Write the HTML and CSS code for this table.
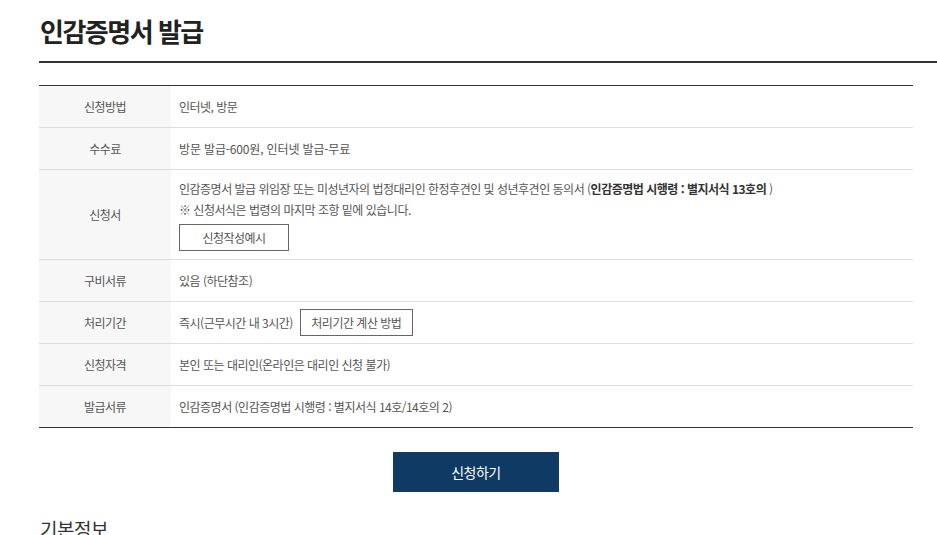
FILE: index.html
```html
<!DOCTYPE html>
<html lang="ko">
<head>
<meta charset="utf-8">
<title>인감증명서 발급</title>
<link rel="stylesheet" href="styles.css">
</head>
<body>
<div class="page">
  <div class="title-bar">
    <h1 class="title">인감증명서 발급</h1>
  </div>
  <div class="content">
    <table class="info">
      <tbody>
        <tr>
          <th>신청방법</th>
          <td>인터넷, 방문</td>
        </tr>
        <tr>
          <th>수수료</th>
          <td><span class="fee">방문 발급-600원, 인터넷 발급-무료</span></td>
        </tr>
        <tr>
          <th>신청서</th>
          <td class="multi">
            <p>인감증명서 발급 위임장 또는 미성년자의 법정대리인 한정후견인 및 성년후견인 동의서 (<strong>인감증명법 시행령 : 별지서식 13호의 </strong>)</p>
            <p>※ 신청서식은 법령의 마지막 조항 밑에 있습니다.</p>
            <span class="btn-line wide">신청작성예시</span>
          </td>
        </tr>
        <tr>
          <th>구비서류</th>
          <td>있음 (하단참조)</td>
        </tr>
        <tr>
          <th>처리기간</th>
          <td><div class="inline-row"><span>즉시(근무시간 내 3시간)</span><span class="btn-line">처리기간 계산 방법</span></div></td>
        </tr>
        <tr>
          <th>신청자격</th>
          <td>본인 또는 대리인(온라인은 대리인 신청 불가)</td>
        </tr>
        <tr>
          <th>발급서류</th>
          <td>인감증명서 (인감증명법 시행령 : 별지서식 14호/14호의 2)</td>
        </tr>
      </tbody>
    </table>
    <div class="actions">
      <span class="btn-primary">신청하기</span>
    </div>
    <h2 class="sub-title">기본정보</h2>
  </div>
</div>
</body>
</html>
```
FILE: styles.css
```css
* { box-sizing: border-box; }
html, body { margin: 0; padding: 0; background: #fff; }
body {
  font-family: "Noto Sans CJK KR", "Noto Sans", sans-serif;
  color: #555;
  overflow: hidden;
}
.page { padding-left: 39px; }
.title-bar {
  border-bottom: 2px solid #333;
  margin-right: -40px;
  padding: 14px 0 13px 1px;
}
.title {
  margin: 0;
  font-size: 26px;
  font-weight: 700;
  letter-spacing: -1.5px;
  line-height: 34px;
  color: #222;
}
.content { width: 874px; padding-top: 22px; }
.info {
  width: 100%;
  border-collapse: collapse;
  border-top: 1px solid #333;
  border-bottom: 1px solid #333;
  font-size: 12px;
  letter-spacing: -0.5px;
  line-height: 21px;
}
.info th, .info td {
  border-bottom: 1px solid #ddd;
  padding: 10px 8px;
  text-align: left;
  vertical-align: middle;
}
.info tr:last-child th, .info tr:last-child td { border-bottom: 0; }
.info th {
  width: 132px;
  background: #f7f7f7;
  font-weight: 400;
  text-align: center;
  color: #555;
}
.info td { color: #555; }
.info .fee { letter-spacing: -0.15px; }
.info td.multi { padding-top: 8px; padding-bottom: 8px; }
.info p { margin: 0; }
.info strong { color: #333; font-weight: 700; }
.btn-line {
  display: inline-flex;
  align-items: center;
  justify-content: center;
  height: 27px;
  padding: 0 12px;
  border: 1px solid #666;
  color: #555;
  background: #fff;
}
.btn-line.wide { width: 110px; margin-top: 4px; }
.inline-row { display: flex; align-items: center; gap: 7px; margin: -3px 0; }
.inline-row .btn-line { width: 113px; padding: 0; }
.actions { display: flex; justify-content: center; padding-top: 24px; }
.btn-primary {
  display: flex;
  align-items: center;
  justify-content: center;
  width: 166px;
  height: 40px;
  background: #0f3a63;
  color: #fff;
  font-size: 14px;
  letter-spacing: -0.5px;
}
.sub-title {
  margin: 24px 0 0 1px;
  font-size: 19px;
  font-weight: 400;
  color: #333;
  letter-spacing: -0.5px;
  line-height: 26px;
}
```
